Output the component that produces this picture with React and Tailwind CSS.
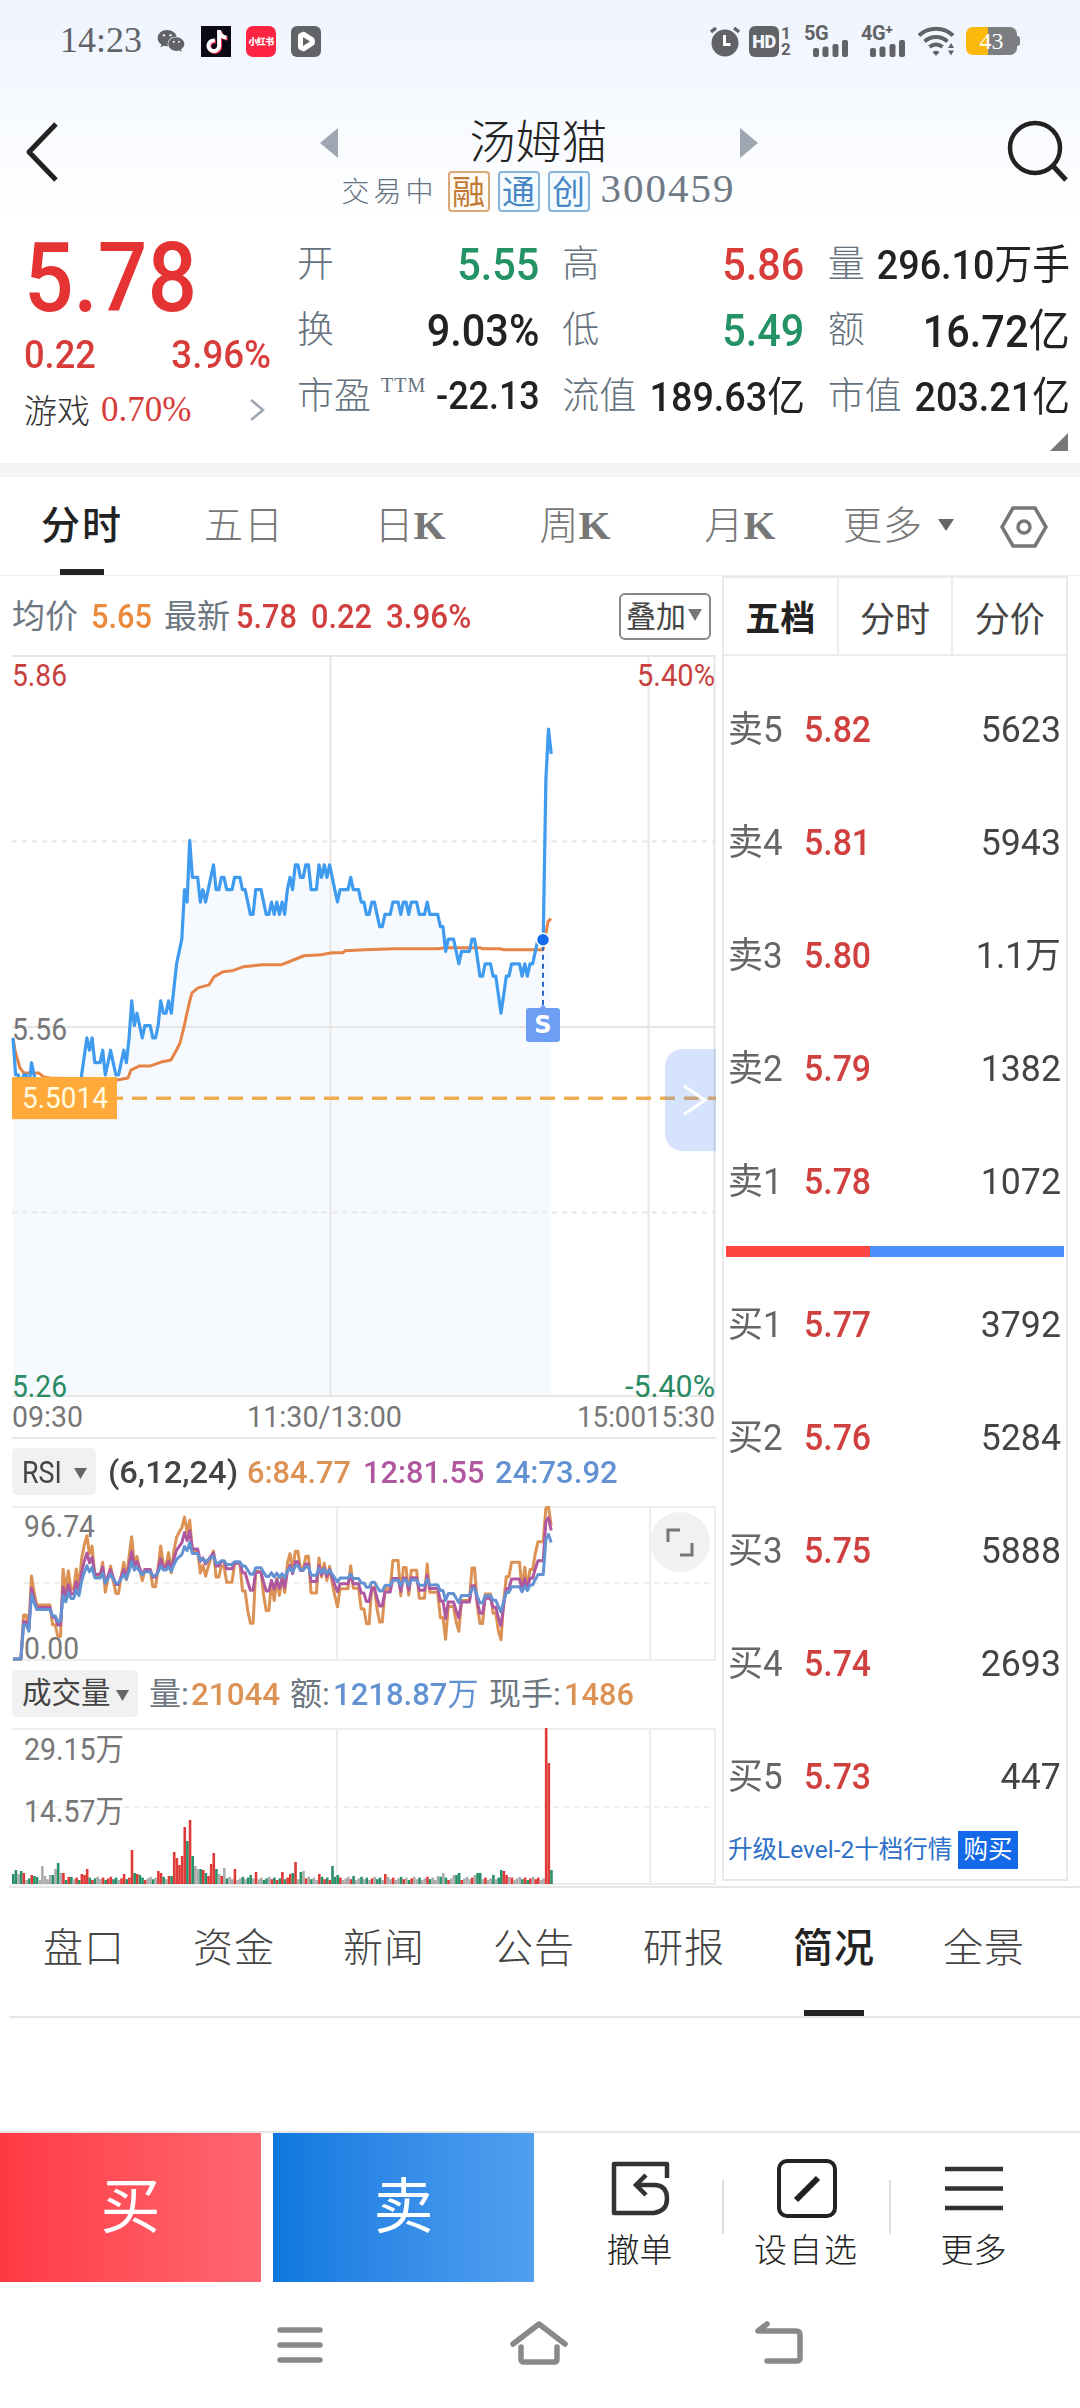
import { FaWeixin, FaTiktok } from 'react-icons/fa6';

// one entry per minute: [minute, price in cents above 5.00]
const PRICE_POINTS = [
  [0, 55], [1, 52], [2, 52], [3, 51], [4, 52], [5, 52], [6, 51], [7, 53], [8, 52], [9, 51], [14, 51],
  [15, 50], [16, 50], [17, 49], [18, 49], [19, 51], [20, 50], [21, 51], [22, 50], [23, 50], [24, 51],
  [25, 50], [26, 52], [28, 55], [29, 54], [30, 55], [31, 53], [33, 53], [34, 54], [35, 52], [37, 54],
  [39, 52], [40, 52], [42, 54], [43, 53], [44, 55], [45, 58], [46, 56], [47, 57], [49, 55], [50, 56],
  [52, 56], [53, 55], [54, 55], [55, 56], [56, 58], [57, 57], [58, 57], [59, 58], [60, 57], [61, 59],
  [62, 61], [63, 62], [64, 63], [65, 67], [66, 66], [67, 71], [68, 68], [70, 68], [71, 66], [72, 67],
  [73, 66], [75, 68], [76, 69], [77, 67], [78, 67], [79, 68], [80, 68], [81, 67], [83, 67], [84, 68],
  [86, 68], [87, 67], [88, 67], [90, 65], [91, 65], [92, 67], [94, 67], [96, 65], [97, 65], [98, 66],
  [99, 65], [100, 66], [101, 65], [102, 66], [103, 65], [104, 67], [105, 68], [106, 67], [107, 69],
  [108, 69], [109, 68], [110, 68], [111, 69], [112, 69], [113, 67], [115, 67], [116, 69], [117, 68],
  [118, 69], [119, 68], [120, 69], [123, 66], [124, 67], [127, 67], [128, 68], [129, 67], [131, 67],
  [132, 66], [133, 66], [134, 65], [135, 65], [136, 66], [137, 66], [139, 64], [140, 64], [141, 65],
  [143, 65], [144, 66], [146, 66], [147, 65], [148, 66], [149, 66], [150, 65], [151, 66], [153, 66],
  [154, 65], [156, 65], [157, 66], [158, 65], [161, 65], [162, 64], [163, 64], [164, 62], [165, 63],
  [167, 63], [169, 61], [170, 62], [173, 62], [174, 63], [175, 63], [177, 60], [178, 60], [179, 61],
  [181, 61], [182, 60], [183, 60], [185, 57], [187, 60], [188, 60], [189, 61], [192, 61], [193, 60],
  [194, 61], [195, 60], [196, 61], [197, 61], [199, 63], [201, 63], [202, 76], [203, 80], [204, 78],
];

const AVERAGE_LINE =
  '1,382 3,394 5,402 8,412 12,417 27,417 32,421 38,422 105,424 116,422 119,414 127,410 138,410 149,406 159,404 165,393 168,387 172,371 175,357 178,344 180,337 186,332 197,329 202,321 211,316 220,315 231,311 250,309 269,309 277,306 292,300 309,299 320,297 331,297 333,295 353,294 383,293 426,293 433,292 468,292 471,293 488,293 492,294 531,294 534,277 536,266 539,263';

// minutes whose volume stands out, bar height in px
const VOLUME_PEAKS = {
  0: 10, 1: 14, 2: 10, 3: 13, 4: 11, 7: 9, 8: 8, 9: 7, 11: 18, 12: 8, 14: 9, 15: 9, 16: 15, 17: 21,
  18: 11, 19: 11, 21: 7, 26: 10, 27: 9, 28: 15, 42: 10, 45: 34, 46: 11, 47: 10, 48: 9, 55: 13, 56: 11,
  59: 8, 60: 8, 61: 32, 62: 26, 63: 19, 64: 28, 65: 57, 66: 43, 67: 64, 68: 28, 69: 18, 70: 15, 71: 15,
  72: 14, 73: 11, 74: 8, 75: 20, 76: 31, 77: 15, 78: 10, 79: 8, 80: 16, 84: 15, 90: 9, 92: 12, 102: 12,
  105: 10, 106: 11, 107: 22, 109: 12, 110: 13, 116: 10, 121: 18, 123: 9, 129: 8, 141: 10, 161: 8,
  163: 11, 167: 9, 168: 9, 169: 11, 175: 9, 176: 11, 177: 11, 182: 9, 185: 14, 186: 13, 187: 9, 188: 7,
  202: 156, 203: 121, 204: 14,
};

const STEP = 2.638;

const prices = [];
for (let i = 0; i < PRICE_POINTS.length - 1; i++) {
  const [m0, p0] = PRICE_POINTS[i];
  const [m1, p1] = PRICE_POINTS[i + 1];
  for (let m = m0; m < m1; m++) prices.push(p0 + ((p1 - p0) * (m - m0)) / (m1 - m0));
}
prices.push(78);

const priceLine = prices.map((p, m) => `${(1 + m * STEP).toFixed(1)},${((86 - p) * 12.32).toFixed(1)}`).join(' ');

const rsi = (n) => {
  let up = 0;
  let all = 0;
  return prices.map((p, i) => {
    const diff = i ? p - prices[i - 1] : 0;
    up = (up * (n - 1) + Math.max(diff, 0)) / n;
    all = (all * (n - 1) + Math.abs(diff)) / n;
    return all ? (up / all) * 100 : 0;
  });
};

const rsiLine = (n) =>
  rsi(n).map((v, m) => `${(1 + m * STEP).toFixed(1)},${(153 - Math.min(v, 96.74) * 1.575).toFixed(1)}`).join(' ');

const volumes = prices.map((p, m) => {
  const diff = m ? p - prices[m - 1] : -1;
  const color = diff > 0 ? '#df3a38' : diff < 0 ? '#2a9068' : '#ababab';
  return { color, height: VOLUME_PEAKS[m] ?? 4 + ((m * 7) % 5) * 0.8 };
});

const STATS = [
  { label: '开', value: '5.55', style: 'text-[#239265] text-[45px]' },
  { label: '高', value: '5.86', style: 'text-[#d73c3a] text-[45px]' },
  { label: '量', value: '296.10', unit: '万手', style: 'text-[#222] text-[41px] pt-[3px]' },
  { label: '换', value: '9.03%', style: 'text-[#222] text-[45px]' },
  { label: '低', value: '5.49', style: 'text-[#239265] text-[45px]' },
  { label: '额', value: '16.72', unit: '亿', style: 'text-[#222] text-[45px] pt-[3px]' },
  { label: '市盈', sup: 'TTM', value: '-22.13', style: 'text-[#222] text-[39px]' },
  { label: '流值', value: '189.63', unit: '亿', style: 'text-[#222] text-[41px] pt-[2px]' },
  { label: '市值', value: '203.21', unit: '亿', style: 'text-[#222] text-[41px] pt-[2px]' },
];

const SELLS = [['卖5', '5.82', '5623'], ['卖4', '5.81', '5943'], ['卖3', '5.80', '1.1万'], ['卖2', '5.79', '1382'], ['卖1', '5.78', '1072']];
const BUYS = [['买1', '5.77', '3792'], ['买2', '5.76', '5284'], ['买3', '5.75', '5888'], ['买4', '5.74', '2693'], ['买5', '5.73', '447']];

const KAI = "font-['Noto_Sans_CJK_SC',sans-serif] font-light";
const DIN = "font-['Roboto','Noto_Sans_CJK_SC',sans-serif]";
const SERIF = "font-['Liberation_Serif',serif]";

const Signal = ({ label }) => (
  <div className="flex h-[31px] w-[46px] flex-col justify-between text-[#626366]">
    <span className="font-['Roboto',sans-serif] text-[20px] leading-[14px] font-bold tracking-[-0.5px]">{label}</span>
    <svg className="ml-[9px] h-[17px] w-9" viewBox="0 0 36 17" fill="currentColor">
      <rect x="0" y="8" width="6" height="9" rx="2" />
      <rect x="9.5" y="6.5" width="6" height="10.5" rx="2" />
      <rect x="19.5" y="4" width="6" height="13" rx="2" />
      <rect x="29" y="0" width="6" height="17" rx="2" />
    </svg>
  </div>
);

const StatusBar = () => (
  <div className="flex h-[84px] items-center pb-[2px] pl-[60px] text-[#626366]">
    <span className={`${SERIF} w-[97px] pb-[3px] text-[36px] leading-none`}>14:23</span>
    <FaWeixin className="mr-4 h-7 w-7" />
    <span className="mr-[15px] flex h-[31px] w-[30px] items-center justify-center bg-[#0b0a14]">
      <FaTiktok className="h-[23px] w-[21px] text-white drop-shadow-[1px_1px_0_#fe2c55]" />
    </span>
    <span className="mr-[15px] flex h-[31px] w-[30px] items-center justify-center rounded-[7px] bg-[#ff2442]">
      <span className="font-['Noto_Sans_CJK_SC',sans-serif] text-[9px] leading-none font-black tracking-[-0.6px] text-white">小红书</span>
    </span>
    <svg className="h-[31px] w-[30px]" viewBox="0 0 30 31">
      <rect width="30" height="31" rx="6" fill="#626366" />
      <path d="M9 7l4-1.5 10 6.5q2 3.500 0 7l-10 6.500-4-1.500q-2-1-2-3V10q0-2 2-3z" fill="#fff" />
      <path d="M12 11v9l7-4.500z" fill="#626366" />
    </svg>
    <div className="ml-auto flex items-center pr-[60px]">
      <svg className="mr-[9px] h-[31px] w-[30px]" viewBox="0 0 30 31" fill="none">
        <circle cx="15" cy="17" r="13.500" fill="#626366" />
        <path d="M1 6l5-4M29 6l-5-4" stroke="#626366" strokeWidth="3.500" />
        <path d="M14.500 9v9.500h6" stroke="#fff" strokeWidth="3" />
      </svg>
      <span className="flex h-[31px] w-[30px] items-center justify-center rounded-[6px] bg-[#626366] font-['Roboto',sans-serif] text-[18px] font-black tracking-[-0.5px] text-[#f2f6fd]">HD</span>
      <span className="mr-[12px] ml-0.5 flex h-[31px] w-[11px] flex-col justify-between font-['Roboto',sans-serif] text-[17px] leading-[15px] font-bold">
        <span>1</span>
        <span>2</span>
      </span>
      <span className="mr-[11px]"><Signal label="5G" /></span>
      <span className="mr-[11px]"><Signal label="4G⁺" /></span>
      <svg className="mr-[11px] h-[31px] w-[37px]" viewBox="0 0 37 31" fill="none" stroke="#626366">
        <path d="M1 9.500a24.500 24.500 0 0 1 34 0" strokeWidth="4" />
        <path d="M6.500 15.500a17 17 0 0 1 23 0" strokeWidth="4" />
        <path d="M11.500 21a10 10 0 0 1 13 0" strokeWidth="4" />
        <path d="M14.500 26l3.500 4 3.500-4q-3.500-2.500-7 0z" fill="#626366" stroke="none" />
        <path d="M30 22l3-5 3 5zM30 24.500l3 5 3-5z" fill="#626366" stroke="none" />
      </svg>
      <span className={`${SERIF} flex h-[28px] w-[51px] items-center justify-center rounded-[7px] bg-linear-to-r from-[#fdb90b] from-43% to-[#7d7e81] to-43% text-[24px] leading-none text-white`}>43</span>
      <span className="h-[10px] w-[3px] rounded-r-sm bg-[#7d7e81]"></span>
    </div>
  </div>
);

const Header = () => (
  <div className="flex h-[136px] items-start justify-between px-[12px]">
    <svg className="mt-[38px] ml-[12px] h-[60px] w-[34px]" viewBox="0 0 34 60" fill="none" stroke="#222" strokeWidth="5">
      <path d="M32 2L5 30l27 28" strokeLinejoin="round" />
    </svg>
    <div className="mr-[9px] ml-[21px] flex flex-col items-center">
      <div className="mt-[34px] flex h-[49px] w-[438px] items-center justify-between">
        <svg className="h-[30px] w-[18px]" viewBox="0 0 18 30"><path d="M18 0v30L0 15z" fill="#9ea6b1" /></svg>
        <span className={`${KAI} pb-[10px] text-[46px] leading-none text-[#222]`}>汤姆猫</span>
        <svg className="h-[30px] w-[18px]" viewBox="0 0 18 30"><path d="M0 0v30l18-15z" fill="#9ea6b1" /></svg>
      </div>
      <div className="mt-[1px] flex items-center">
        <span className={`${KAI} mr-[10px] pb-[4px] text-[28px] leading-none tracking-[4px] text-[#65717d]`}>交易中</span>
        <div className="flex gap-2 font-['Noto_Sans_CJK_SC',sans-serif] text-[33px] leading-none">
          <span className="flex h-[41px] w-[42px] items-center justify-center rounded-[4px] border-2 border-[#d9a878] bg-[#fffaf3] pb-0.5 text-[#c07a33]">融</span>
          <span className="flex h-[41px] w-[42px] items-center justify-center rounded-[4px] border-2 border-[#8ab3da] bg-[#f4fbff] pb-0.5 text-[#4787c4]">通</span>
          <span className="flex h-[41px] w-[42px] items-center justify-center rounded-[4px] border-2 border-[#8ab3da] bg-[#f4fbff] pb-0.5 text-[#4787c4]">创</span>
        </div>
        <span className={`${SERIF} ml-[11px] pb-[6px] text-[41px] leading-none tracking-[2px] text-[#6f7a85]`}>300459</span>
      </div>
    </div>
    <svg className="mt-[36px] -mr-[1px] h-[62px] w-[62px]" viewBox="0 0 62 62" fill="none" stroke="#222" strokeWidth="4.500">
      <circle cx="28" cy="28" r="25" />
      <path d="M46 46l13 14" strokeWidth="5" />
    </svg>
  </div>
);

const Quote = () => (
  <div className="flex h-[243px] pr-[10px]">
    <div className="w-[297px] pl-[24px]">
      <div className={`${DIN} mt-[8px] h-[100px] w-[200px] origin-left scale-x-[.9] text-[97px] leading-[100px] font-medium text-[#e53333]`}>5.78</div>
      <div className={`${DIN} flex h-[54px] w-[247px] items-center justify-between text-[39px] leading-none font-medium text-[#d73c3a]`}>
        <span className="origin-left scale-x-[.93]">0.22</span>
        <span className="origin-right scale-x-[.94]">3.96%</span>
      </div>
      <div className="flex h-[66px] items-center pr-[32px] pb-[11px] leading-none">
        <span className={`${KAI} text-[33px] text-[#333]`}>游戏</span>
        <span className={`${SERIF} ml-[11px] text-[35px] text-[#d73c3a]`}>0.70%</span>
        <svg className="ml-auto h-[22px] w-[16px]" viewBox="0 0 16 22" fill="none" stroke="#9ea6b1" strokeWidth="2.500">
          <path d="M2 1l12 10L2 21" />
        </svg>
      </div>
    </div>
    <div className="flex-1">
      <div className="mt-[11px] grid grid-cols-3 gap-x-[23px]">
        {STATS.map(({ label, value, unit, style, sup }) => (
          <div key={label} className="flex h-[66px] items-center justify-between leading-none">
            <span className={`${KAI} flex pb-[5px] text-[37px] whitespace-nowrap text-[#65717d]`}>
              {label}
              {sup && <span className={`${SERIF} ml-[10px] text-[20px] leading-none tracking-[1px]`}>{sup}</span>}
            </span>
            <span className={`${DIN} ${style} w-0 flex-1 text-right font-medium whitespace-nowrap`}>
              <span className="float-right origin-right scale-x-[.92]">
                {value}
                {unit && <span className="font-normal">{unit}</span>}
              </span>
            </span>
          </div>
        ))}
      </div>
      <svg className="mt-[4px] mr-[2px] ml-auto h-[18px] w-[18px]" viewBox="0 0 18 18"><path d="M18 0v18H0z" fill="#777" /></svg>
    </div>
  </div>
);

const PeriodTabs = () => (
  <div className={`${KAI} flex h-[99px] border-b border-[#eee] text-[39px] leading-none text-[#777]`}>
    <div className="flex w-[164px] flex-col items-center justify-between pt-[26px] font-medium text-[#222]">
      <span className="tracking-[2px]">分时</span>
      <span className="h-[6px] w-[44px] bg-[#222]"></span>
    </div>
    <div className="w-[160px] pt-[26px] text-center tracking-[1px]">五日</div>
    {['日', '周', '月'].map((d) => (
      <div key={d} className="w-[165px] pt-[26px] pl-[7px] text-center">
        {d}
        <span className={`${SERIF} inline-block text-[41px] font-bold`}>K</span>
      </div>
    ))}
    <div className="ml-[24px] flex items-start pt-[26px] tracking-[1px]">
      更多
      <svg className="mt-[16px] ml-[15px] h-3 w-[16px]" viewBox="0 0 16 12"><path d="M0 0h16L8 12z" fill="#666" /></svg>
    </div>
    <svg className="mt-[28px] ml-[46px] h-[44px] w-[48px]" viewBox="0 0 48 44" fill="none" stroke="#777" strokeWidth="3.500">
      <path d="M13 3h22l11 19-11 19H13L2 22z" />
      <circle cx="24" cy="22" r="6" />
    </svg>
  </div>
);

const PriceChart = () => (
  <svg className="block h-[784px] w-[704px] overflow-visible" viewBox="0 0 704 782" preserveAspectRatio="none" fontFamily="Roboto, sans-serif" fontSize="32">
    <polygon points={`1,740 ${priceLine} 539,740`} fill="#f6faff" />
    <g stroke="#e6e6e4" strokeWidth="2" fill="none">
      <path d="M0 1H704M0 371H704M0 739H704M318.500 0V740M636.500 0V740M702.500 0V740" />
      <path d="M0 186H704M0 556H704" strokeDasharray="5 5" />
      <path d="M0 781H704" />
    </g>
    <text x="0" y="31" textLength="55" lengthAdjust="spacingAndGlyphs" fill="#c8403e">5.86</text>
    <text x="625" y="31" textLength="78" lengthAdjust="spacingAndGlyphs" fill="#c8403e">5.40%</text>
    <text x="0" y="384" textLength="55" lengthAdjust="spacingAndGlyphs" fill="#777">5.56</text>
    <text x="0" y="740" textLength="55" lengthAdjust="spacingAndGlyphs" fill="#2a8a62">5.26</text>
    <text x="613" y="740" textLength="90" lengthAdjust="spacingAndGlyphs" fill="#2a8a62">-5.40%</text>
    <polyline points={AVERAGE_LINE} fill="none" stroke="#e58446" strokeWidth="3" strokeLinejoin="round" />
    <polyline points={priceLine} fill="none" stroke="#3f9bef" strokeWidth="3.200" strokeLinejoin="round" />
    <path d="M105 442H704" stroke="#f0ac52" strokeWidth="3.500" strokeDasharray="15 9" strokeDashoffset="9" />
    <rect y="421" width="105" height="42" fill="#ffa93a" />
    <text x="10" y="452" textLength="86" lengthAdjust="spacingAndGlyphs" fill="#fffbe0" fontSize="30">5.5014</text>
    {/* sell marker */}
    <path d="M531 290V352" stroke="#2a68c8" strokeWidth="2" strokeDasharray="5 4" />
    <circle cx="531" cy="284" r="6.500" fill="#1569eb" stroke="#fff" strokeWidth="1.500" />
    <path d="M517 352h11l3-4 3 4h11q3 0 3 3v28q0 3-3 3h-28q-3 0-3-3v-28q0-3 3-3z" fill="#6c9ff4" />
    <text x="531" y="377" textAnchor="middle" fontFamily="DejaVu Sans" fontWeight="bold" fontSize="24" fill="#fff">S</text>
    {/* drawer handle */}
    <path d="M704 393H673q-20 0-20 20v62q0 20 20 20h31z" fill="#5b93f7" fillOpacity=".26" />
    <path d="M672 430l21 14-21 14" fill="none" stroke="#fff" strokeWidth="3" />
    <g fill="#777" fontSize="30">
      <text x="0" y="770" textLength="71" lengthAdjust="spacingAndGlyphs">09:30</text>
      <text x="235" y="770" textLength="155" lengthAdjust="spacingAndGlyphs">11:30/13:00</text>
      <text x="565" y="770" textLength="69" lengthAdjust="spacingAndGlyphs">15:00</text>
      <text x="634" y="770" textLength="69" lengthAdjust="spacingAndGlyphs">15:30</text>
    </g>
  </svg>
);

const RsiChart = () => (
  <svg className="block h-[155px] w-[704px]" viewBox="0 0 704 155" fontFamily="Roboto, sans-serif" fontSize="31">
    <g stroke="#ededed" strokeWidth="2" fill="none">
      <path d="M0 1H704M0 154H704M325 0V154M638 0V154M703 0V154" />
      <path d="M12 77H704" strokeDasharray="5 5" />
    </g>
    <g fill="#777">
      <text x="12" y="31" textLength="71" lengthAdjust="spacingAndGlyphs">96.74</text>
      <text x="12" y="153" textLength="55" lengthAdjust="spacingAndGlyphs">0.00</text>
    </g>
    <g fill="none" strokeWidth="3" strokeLinejoin="round">
      <polyline points={rsiLine(6)} stroke="#dc9254" />
      <polyline points={rsiLine(12)} stroke="#b0589f" />
      <polyline points={rsiLine(24)} stroke="#6392d2" />
    </g>
    <circle cx="668" cy="36" r="30" fill="#f1f1f1" />
    <path d="M656 36V24h12M680 37v12h-12" fill="none" stroke="#777" strokeWidth="3" />
  </svg>
);

const VolumeChart = () => (
  <svg className="block h-[158px] w-[704px]" viewBox="0 0 704 158" fontFamily="Roboto, 'Noto Sans CJK SC', sans-serif" fontSize="31">
    <g stroke="#ededed" strokeWidth="2" fill="none">
      <path d="M0 1H704M0 156H704M325 0V156M638 0V156M703 0V156" />
      <path d="M12 79H704" strokeDasharray="5 5" />
    </g>
    <g fill="#777">
      <text x="12" y="32" textLength="100" lengthAdjust="spacingAndGlyphs">29.15万</text>
      <text x="12" y="94" textLength="100" lengthAdjust="spacingAndGlyphs">14.57万</text>
    </g>
    {volumes.map(({ color, height }, m) => (
      <rect key={m} x={m * STEP} y={156 - height} width="2.600" height={height} fill={color} />
    ))}
  </svg>
);

const Caret = () => (
  <svg className="mt-[3px] h-[11px] w-[13px]" viewBox="0 0 13 11"><path d="M0 0h13L6.500 11z" fill="#666" /></svg>
);

const ChartColumn = () => (
  <div className="w-[704px]">
    <div className={`${DIN} flex h-[79px] items-center pt-[1px] text-[33px] leading-none text-[#d0403e]`}>
      <span className="w-[79px] text-[#6d7781]">均价</span>
      <span className="w-[73px] origin-left scale-x-[.93] font-medium text-[#ea8a3c]">5.65</span>
      <span className="w-[72px] text-[#6d7781]">最新</span>
      <span className="w-[75px] origin-left scale-x-[.93] font-medium">5.78</span>
      <span className="w-[75px] origin-left scale-x-[.93] font-medium">0.22</span>
      <span className="origin-left scale-x-[.95] font-medium">3.96%</span>
      <span className="mr-[5px] ml-auto flex h-[47px] w-[92px] items-start rounded-[6px] border-2 border-[#888] pt-[7px] pl-[5px] text-[30px] text-[#444]">
        叠加
        <svg className="mt-[7px] ml-[2px] h-[12px] w-[14px]" viewBox="0 0 14 12"><path d="M0 0h14L7 12z" fill="#777" /></svg>
      </span>
    </div>
    <PriceChart />
    <div className={`${DIN} flex h-[67px] items-center pb-[2px] text-[32px] leading-none font-medium whitespace-nowrap`}>
      <span className="flex h-[47px] w-[84px] items-center justify-between rounded-[5px] bg-[#f1f1f1] pr-[9px] pl-[10px] font-normal text-[#444]">
        <span className="w-[42px] origin-left scale-x-[.84]">RSI</span>
        <Caret />
      </span>
      <span className="ml-[12px] w-[139px] origin-left scale-x-[1.02] text-[#444]">(6,12,24)</span>
      <span className="w-[116px] origin-left scale-x-[.96] text-[#dc9254]">6:84.77</span>
      <span className="w-[132px] origin-left scale-x-[.96] text-[#b0589f]">12:81.55</span>
      <span className="origin-left scale-x-[.97] text-[#6392d2]">24:73.92</span>
    </div>
    <RsiChart />
    <div className={`${DIN} flex h-[67px] items-center pb-[2px] text-[32px] leading-none font-medium whitespace-nowrap`}>
      <span className="flex h-[47px] w-[126px] items-center justify-between rounded-[5px] bg-[#f1f1f1] pr-[9px] pl-[10px] text-[29.500px] font-normal text-[#444]">
        成交量
        <Caret />
      </span>
      <span className="ml-[11px] w-[42px] font-normal text-[#6d7781]">量:</span>
      <span className="w-[99px] origin-left scale-x-[.98] text-[#dc9254]">21044</span>
      <span className="w-[43px] font-normal text-[#6d7781]">额:</span>
      <span className="w-[156px] origin-left scale-x-[.97] text-[#6392d2]">
        1218.87<span className="font-normal">万</span>
      </span>
      <span className="w-[75px] font-normal text-[#6d7781]">现手:</span>
      <span className="origin-left scale-x-[.96] text-[#dc9254]">1486</span>
    </div>
    <VolumeChart />
  </div>
);

const OrderRow = ({ row: [label, price, amount] }) => (
  <div className={`${DIN} flex h-[113.200px] items-center text-[36px] leading-none`}>
    <span className="w-[76px] origin-left scale-x-[.97] text-[#666]">{label}</span>
    <span className="origin-left scale-x-[.94] font-medium text-[#d0403e]">{price}</span>
    <span className="ml-auto origin-right scale-x-[.99] text-[#444]">{amount}</span>
  </div>
);

const OrderBook = () => (
  <div className="ml-[6px] h-[1305px] w-[346px] border-2 border-[#e9e9e9]">
    <div className="flex h-[78px] divide-x-2 divide-[#ececec] border-b-2 border-[#ececec] text-[35px] leading-none text-[#444]">
      <span className="flex flex-1 items-center justify-center pb-0.5 font-['Noto_Sans_CJK_SC',sans-serif] font-bold text-[#222]">五档</span>
      <span className="flex flex-1 items-center justify-center font-['Noto_Sans_CJK_SC',sans-serif]">分时</span>
      <span className="flex flex-1 items-center justify-center font-['Noto_Sans_CJK_SC',sans-serif]">分价</span>
    </div>
    <div className="pt-[17px] pr-[5px] pl-[4px]">
      {SELLS.map((row) => <OrderRow key={row[0]} row={row} />)}
    </div>
    <div className="mx-[2px] mt-[7px] flex h-[11px]">
      <span className="w-[144px] bg-[#fd4641]"></span>
      <span className="flex-1 bg-[#4d8ffb]"></span>
    </div>
    <div className="mt-[11px] pr-[5px] pl-[4px]">
      {BUYS.map((row) => <OrderRow key={row[0]} row={row} />)}
    </div>
    <div className={`${DIN} -mt-[3px] flex items-center pl-[4px] text-[24.500px] leading-none whitespace-nowrap text-[#2e70c8]`}>
      <span className="w-[230px]">升级Level-2十档行情</span>
      <span className="flex h-[38px] w-[60px] items-center justify-center bg-[#1369e8] text-white">购买</span>
    </div>
  </div>
);

const InfoTabs = () => (
  <div className="ml-[9px] flex h-[132px] border-y-2 border-[#e6e6e6] pr-[21px]">
    {['盘口', '资金', '新闻', '公告', '研报', '简况', '全景'].map((tab) => (
      <div
        key={tab}
        className={`flex flex-1 flex-col items-center justify-between pt-[37px] font-['Noto_Sans_CJK_SC',sans-serif] text-[40px] leading-none tracking-[1px] ${
          tab === '简况' ? 'font-medium text-[#222]' : 'font-light text-[#444]'
        }`}
      >
        {tab}
        {tab === '简况' && <span className="h-[6px] w-[60px] bg-[#222]"></span>}
      </div>
    ))}
  </div>
);

const ActionBar = () => (
  <div className={`${KAI} flex h-[151px] border-t-2 border-[#e4e4e4] leading-none`}>
    <button className="mr-[12px] flex w-[261px] items-center justify-center bg-linear-to-r from-[#ff3843] to-[#ff6671] pb-[12px] text-[60px] font-normal text-white">买</button>
    <button className="flex w-[261px] items-center justify-center bg-linear-to-r from-[#0b78df] to-[#509ff0] pb-[12px] text-[60px] font-normal text-white">卖</button>
    <div className="flex flex-1 items-start pt-[25px] text-[33px] text-[#222]">
      <div className="ml-[23px] flex w-[165px] flex-col items-center">
        <svg className="h-[60px] w-[60px]" viewBox="0 0 60 60" fill="none" stroke="#333" strokeWidth="4.500">
          <path d="M57 20V6H4v49h40q13-2 13-14 0-14-13-14H27" strokeLinejoin="round" />
          <path d="M36 17L26 27l10 10" />
        </svg>
        <span className="mt-[14px]">撤单</span>
      </div>
      <span className="mt-[22px] h-[54px] w-[2px] bg-[#ddd]"></span>
      <div className="flex w-[165px] flex-col items-center">
        <svg className="h-[60px] w-[60px]" viewBox="0 0 60 60" fill="none" stroke="#222" strokeWidth="4">
          <rect x="2" y="3" width="56" height="55" rx="8" />
          <path d="M19 42L41 20" strokeWidth="6" />
        </svg>
        <span className="mt-[14px] tracking-[2px]">设自选</span>
      </div>
      <span className="mt-[22px] h-[54px] w-[2px] bg-[#ddd]"></span>
      <div className="flex w-[165px] flex-col items-center">
        <svg className="h-[60px] w-[60px]" viewBox="0 0 60 60" stroke="#333" strokeWidth="4.500">
          <path d="M1 11h58M1 30.500h58M1 50h58" />
        </svg>
        <span className="mt-[14px]">更多</span>
      </div>
    </div>
  </div>
);

const NavBar = () => (
  <div className="flex h-[126px] items-center justify-between px-[276px] pb-[7px]">
    <svg className="h-[44px] w-[48px]" viewBox="0 0 48 44" stroke="#898989" strokeWidth="5.500" strokeLinecap="round">
      <path d="M4 10h40M4 25h40M4 40h40" />
    </svg>
    <svg className="h-[46px] w-[60px]" viewBox="0 0 60 46" fill="none" stroke="#898989" strokeWidth="5.500" strokeLinecap="round" strokeLinejoin="round">
      <path d="M4 25L30 5l26 20" />
      <path d="M12 28v12q0 3 3 3h30q3 0 3-3V28" />
    </svg>
    <svg className="h-[46px] w-[50px]" viewBox="0 0 50 46" fill="none" stroke="#898989" strokeWidth="5.500" strokeLinecap="round" strokeLinejoin="round">
      <path d="M13 5L4 12h38q4 0 4 4v23q0 3-4 3H13" />
    </svg>
  </div>
);

const App = () => {
  return (
    <div className="flex h-[2408px] w-[1080px] flex-col overflow-hidden bg-white">
      <div className="bg-linear-to-b from-[#eef4fe] to-white">
        <StatusBar />
        <Header />
      </div>
      <Quote />
      <div className="h-[14px] bg-[#f4f4f4]"></div>
      <PeriodTabs />
      <div className="flex h-[1310px] pl-[12px]">
        <ChartColumn />
        <OrderBook />
      </div>
      <InfoTabs />
      <div className="flex-1"></div>
      <ActionBar />
      <NavBar />
    </div>
  );
};

export default App;
